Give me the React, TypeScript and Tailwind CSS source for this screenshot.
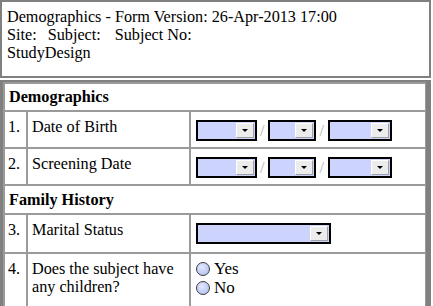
import React from "react";

const Select = ({ w }: { w: number }) => (
	<div
		className="flex h-[21px] shrink-0 border-2 border-black bg-[#ccd4fe] p-[1px]"
		style={{ width: w }}
	>
		<div className="flex-1 bg-[#ccd4fe]" />
		<div className="flex w-[18px] items-center justify-center border border-b-[#a0a0a0] border-l-white border-r-[#a0a0a0] border-t-white bg-[#ececec]">
			<div className="h-0 w-0 border-l-[3px] border-r-[3px] border-t-[3px] border-l-transparent border-r-transparent border-t-black" />
		</div>
	</div>
);

const Radio = ({ label }: { label: string }) => (
	<div className="flex h-[19px] items-center">
		<div className="h-[14px] w-[14px] rounded-full border border-[#3c3c3c] bg-[radial-gradient(circle_at_40%_35%,#e4e9ff,#aab8ee)]" />
		<span className="ml-[4px] text-[17px]">{label}</span>
	</div>
);

const DateFields = () => (
	<div className="flex items-center">
		<Select w={61} />
		<span className="mx-[3px] text-[#b0b0b0]">/</span>
		<Select w={48} />
		<span className="mx-[4px] text-[#b0b0b0]">/</span>
		<Select w={64} />
	</div>
);

const Section = ({ title, h }: { title: string; h: number }) => (
	<div className="flex items-center bg-white pl-[4px] font-bold" style={{ height: h }}>
		{title}
	</div>
);

const Row = ({
	n,
	label,
	h,
	children,
}: {
	n: string;
	label: React.ReactNode;
	h: number;
	children: React.ReactNode;
}) => (
	<div className="grid grid-cols-[21px_161px_1fr] gap-[2px]" style={{ height: h }}>
		<div className="bg-white pl-[3px] pt-[6px]">{n}</div>
		<div className="bg-white pl-[4px] pt-[6px] leading-[18px]">{label}</div>
		<div className="bg-white pl-[5px] pt-[8px]">{children}</div>
	</div>
);

export default function App() {
	return (
		<div className="h-[306px] w-[433px] overflow-hidden bg-white font-['Liberation_Serif',serif] text-[16.2px] leading-[18px] text-black">
			<div className="h-[78px] w-[431px] border-2 border-[#808080] px-[5px] pt-[6px]">
				<div>Demographics - Form Version: 26-Apr-2013 17:00</div>
				<div className="flex">
					<span>Site:</span>
					<span className="ml-[11px]">Subject:</span>
					<span className="ml-[14px]">Subject No:</span>
				</div>
				<div>StudyDesign</div>
			</div>
			<div className="mt-[2px] flex w-[431px] flex-col gap-[2px] border-l-[3px] border-r-[5px] border-t-[2px] border-[#808080] bg-[#9a9a9a] p-[2px] pr-[1px]">
				<Section title="Demographics" h={26} />
				<Row n="1." label="Date of Birth" h={35}>
					<DateFields />
				</Row>
				<Row n="2." label="Screening Date" h={35}>
					<DateFields />
				</Row>
				<Section title="Family History" h={27} />
				<Row n="3." label="Marital Status" h={37}>
					<Select w={135} />
				</Row>
				<Row n="4." label={<>Does the subject have<br />any children?</>} h={52}>
					<div className="-mt-[3px]">
						<Radio label="Yes" />
						<Radio label="No" />
					</div>
				</Row>
			</div>
		</div>
	);
}
